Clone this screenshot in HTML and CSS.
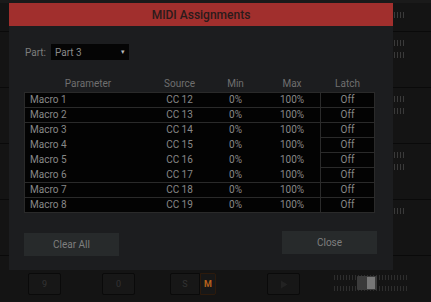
FILE: index.html
```html
<!DOCTYPE html>
<html lang="en">
<head>
  <meta charset="UTF-8" />
  <title>MIDI Assignments</title>
  <link rel="stylesheet" href="styles.css">
</head>
<body>
  <div class="app">
    <div class="topstrip"></div>
    <div class="band first"><span class="ticks t1"></span></div>
    <div class="band"><span class="ticks"></span><span class="ticks low"></span></div>
    <div class="band"><span class="ticks"></span><span class="ticks low"></span></div>
    <div class="band"><span class="ticks"></span><span class="ticks low"></span></div>
    <div class="band"><span class="ticks"></span></div>
    <div class="transport">
      <div class="tbtn b9">9</div>
      <div class="tbtn b0">0</div>
      <div class="sm">
        <div class="tbtn s">S</div>
        <div class="tbtn m">M</div>
      </div>
      <div class="tbtn play">
        <svg width="8" height="9" viewBox="0 0 8 9"><path d="M1 0.5 L7.5 4.5 L1 8.5 Z" fill="#222"/></svg>
      </div>
      <div class="slider">
        <div class="rail"></div>
        <div class="rail"></div>
        <div class="knob"><span></span></div>
      </div>
    </div>
  </div>

  <div class="dialog">
    <div class="dialog-title">MIDI Assignments</div>
    <div class="dialog-body">
      <div class="part-row">
        <label>Part:</label>
        <div class="select">Part 3<span class="arrow">▾</span></div>
      </div>

      <div class="grid-head">
        <div class="c-param">Parameter</div>
        <div>Source</div>
        <div>Min</div>
        <div>Max</div>
        <div>Latch</div>
      </div>

      <div class="grid" id="grid"></div>

      <div class="actions">
        <button class="btn clear">Clear All</button>
        <button class="btn close">Close</button>
      </div>
    </div>
  </div>

  <script>
    const grid = document.getElementById('grid');
    const openTop = [4, 5, 6];
    for (let i = 1; i <= 8; i++) {
      const row = document.createElement('div');
      row.className = 'row' + (openTop.includes(i) ? ' open' : '');
      row.innerHTML = `
        <div class="c-param">Macro ${i}</div>
        <div>CC ${11 + i}</div>
        <div>0%</div>
        <div>100%</div>
        <div class="latch">Off</div>`;
      grid.appendChild(row);
    }
  </script>
</body>
</html>
```

FILE: styles.css
```css
html, body {
  margin: 0;
  padding: 0;
}
body {
  width: 431px;
  height: 302px;
  overflow: hidden;
  background: #151515;
  font-family: Roboto, "Liberation Sans", sans-serif;
  position: relative;
}
.app {
  display: flex;
  flex-direction: column;
}
.topstrip {
  height: 3px;
  background: #1a1a1a;
}
.band {
  height: 56px;
  border-bottom: 1px solid #0a0a0a;
  background: #141414;
  position: relative;
  box-sizing: border-box;
}
.band.first {
  height: 29px;
}
.ticks {
  position: absolute;
  left: 394px;
  top: 8px;
  width: 10px;
  height: 6px;
  background: repeating-linear-gradient(90deg, #3a3a3a 0 1px, transparent 1px 3px);
}
.ticks.t1 {
  top: 9px;
}
.ticks.low {
  top: 20px;
}
.transport {
  height: 45px;
  display: flex;
  align-items: flex-start;
  background: #141414;
  position: relative;
}
.tbtn {
  height: 22px;
  border: 1px solid #0a0a0a;
  border-radius: 2px;
  background: #171717;
  color: #333;
  font-size: 9px;
  display: flex;
  align-items: center;
  justify-content: center;
  box-sizing: border-box;
  margin-top: 17px;
}
.b9 {
  width: 33px;
  margin-left: 28px;
}
.b0 {
  width: 33px;
  margin-left: 41px;
}
.sm {
  display: flex;
  margin-left: 35px;
}
.s {
  width: 30px;
  border-radius: 2px 0 0 2px;
}
.m {
  width: 16px;
  color: #b8621c;
  font-weight: bold;
  border-color: #2c1a0c;
  border-radius: 0 2px 2px 0;
}
.play {
  width: 33px;
  margin-left: 51px;
}
.slider {
  position: relative;
  width: 74px;
  margin-left: 34px;
  margin-top: 19px;
  display: flex;
  flex-direction: column;
  gap: 6px;
}
.rail {
  height: 5px;
  background: repeating-linear-gradient(90deg, #2e2e2e 0 1px, transparent 1px 3px);
}
.knob {
  position: absolute;
  left: 23px;
  top: 1px;
  width: 20px;
  height: 14px;
  background: #3a3a3a;
  border-radius: 1px;
}
.knob span {
  position: absolute;
  left: 10px;
  top: 1px;
  width: 8px;
  height: 12px;
  background: #777;
}

.dialog {
  position: absolute;
  left: 9px;
  top: 3px;
  width: 384px;
  height: 267px;
  background: #1c1d1f;
  display: flex;
  flex-direction: column;
}
.dialog-title {
  height: 23px;
  background: #a12f2d;
  color: #2a1b1b;
  font-size: 12px;
  font-weight: 500;
  display: flex;
  align-items: center;
  justify-content: center;
}
.dialog-body {
  padding: 18px 16px 0 15px;
  display: flex;
  flex-direction: column;
}
.part-row {
  display: flex;
  align-items: center;
  gap: 5px;
  padding-left: 1px;
}
.part-row label {
  color: #7d7d7d;
  font-size: 10px;
}
.select {
  width: 78px;
  height: 16px;
  background: #050505;
  color: #8a8a8a;
  font-size: 10px;
  display: flex;
  align-items: center;
  justify-content: space-between;
  padding: 0 4px;
  box-sizing: border-box;
}
.arrow {
  font-size: 7px;
  color: #bbb;
}
.grid-head,
.row {
  display: grid;
  grid-template-columns: 128px 55px 57px 56px 55px;
}
.grid-head {
  margin-top: 16px;
  height: 14px;
  align-items: center;
  color: #6f6f6f;
  font-size: 10px;
  text-align: center;
  margin-bottom: 2px;
}
.grid {
  width: 351px;
  border-left: 1px solid #2a2a2a;
  border-bottom: 1px solid #2a2a2a;
  box-sizing: border-box;
}
.row {
  height: 15px;
  background: #030303;
  border-top: 1px solid #2a2a2a;
  box-sizing: border-box;
  color: #888;
  font-size: 10px;
  text-align: center;
  grid-template-columns: 127px 55px 57px 56px 55px;
}
.row.open {
  border-top-color: #030303;
}
.row > div {
  line-height: 14px;
}
.row .c-param {
  text-align: left;
  padding-left: 5px;
}
.row .latch {
  border-left: 1px solid #2a2a2a;
  border-right: 1px solid #2a2a2a;
}
.row.open .latch {
  border-top: 1px solid #2a2a2a;
  margin-top: -1px;
}
.actions {
  display: flex;
  justify-content: space-between;
  align-items: flex-start;
  margin-top: 18px;
}
.btn {
  width: 95px;
  height: 23px;
  border: none;
  background: #272a2b;
  color: #7f7f7f;
  font-family: Roboto, "Liberation Sans", sans-serif;
  font-size: 10px;
  padding: 0;
}
.clear {
  margin-top: 2px;
}
```
